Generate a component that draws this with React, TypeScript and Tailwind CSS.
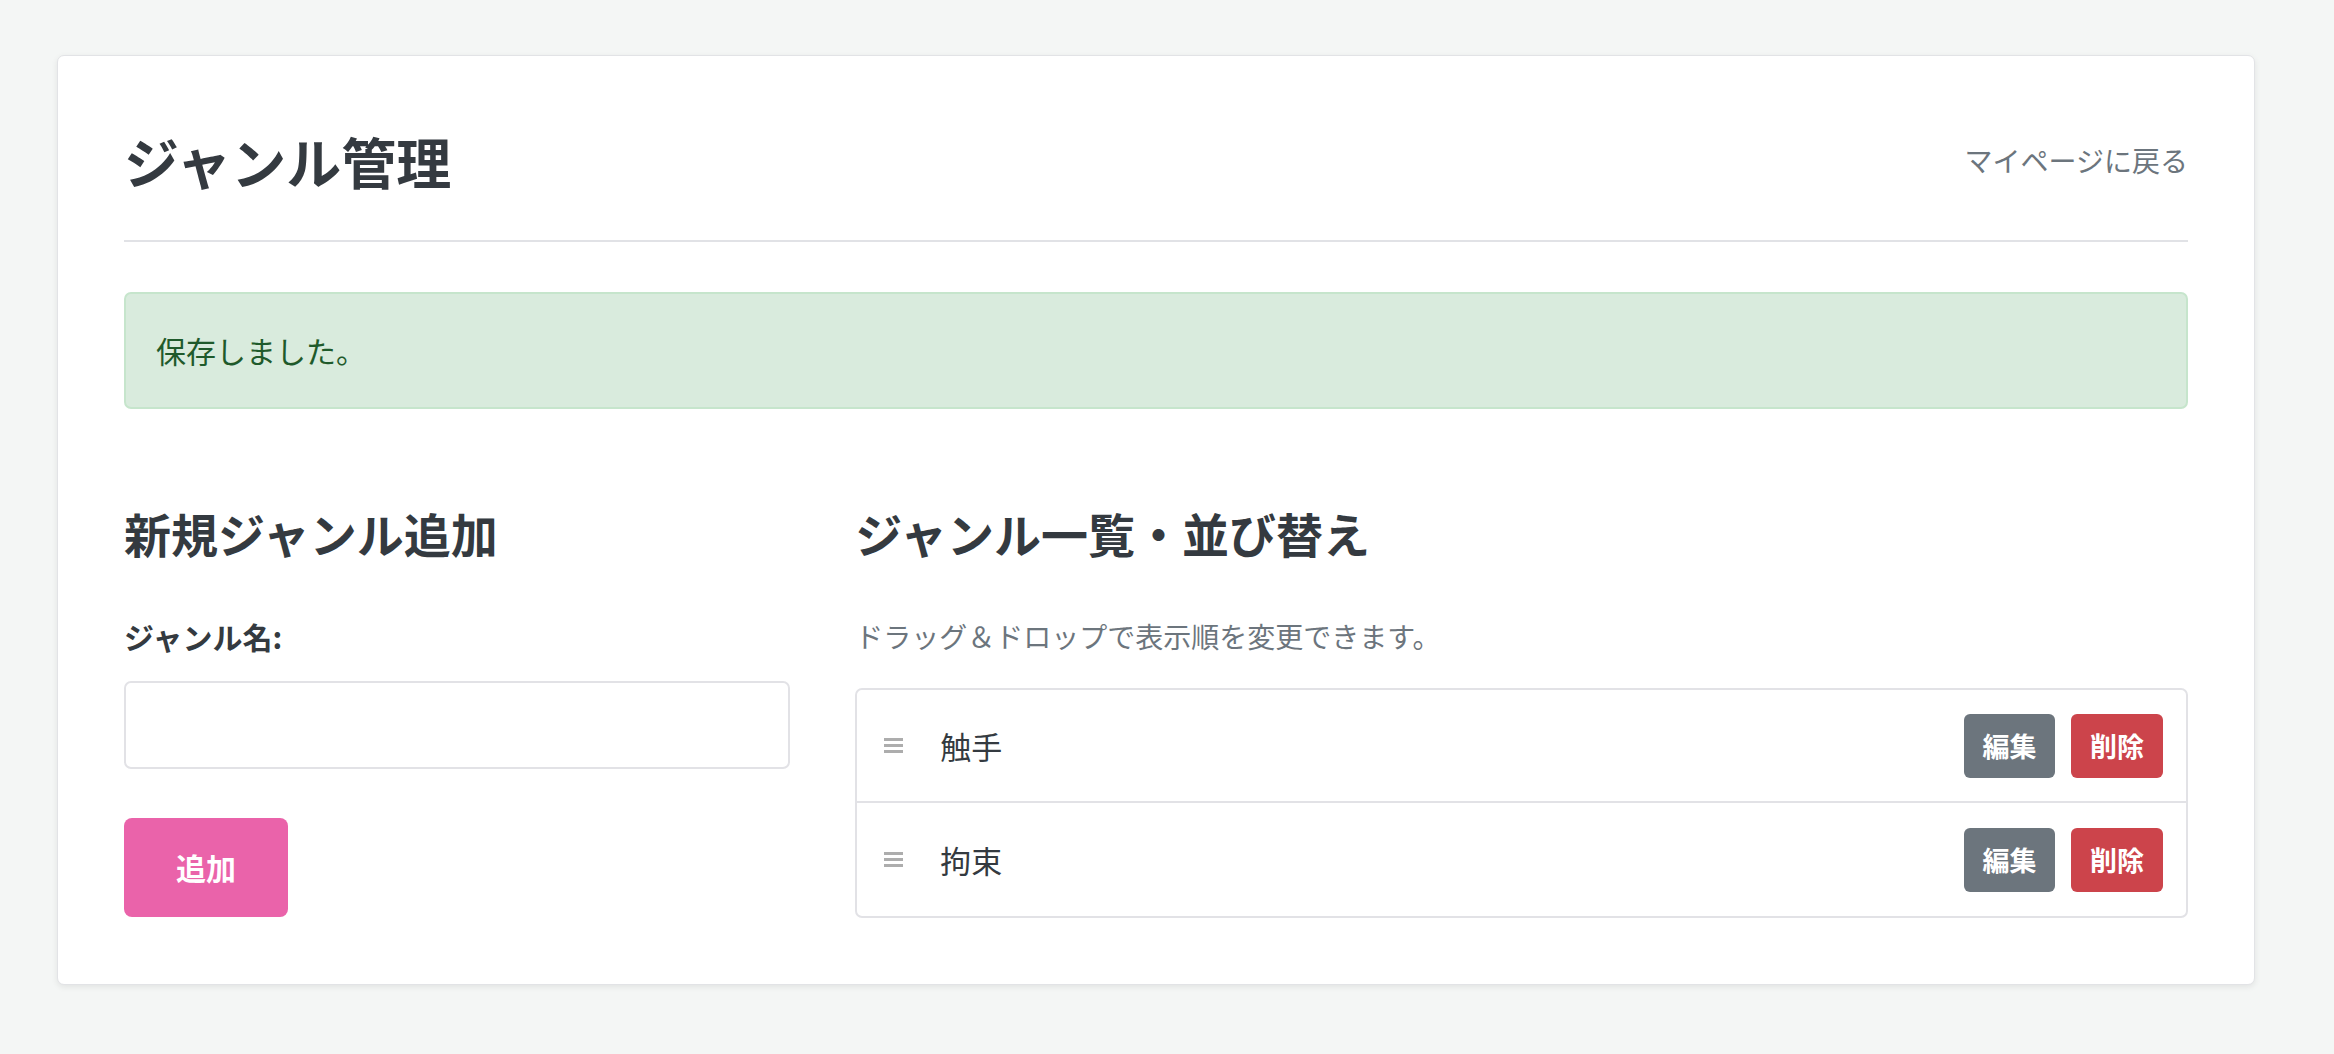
import React from 'react';

const genres = ['触手', '拘束'];

function DragHandle() {
  return (
    <svg width="19" height="15" viewBox="0 0 19 15" className="shrink-0">
      <rect x="0" y="0" width="19" height="3" fill="#adadad" />
      <rect x="0" y="6" width="19" height="3" fill="#adadad" />
      <rect x="0" y="12" width="19" height="3" fill="#adadad" />
    </svg>
  );
}

function GenreRow({ name, last }: { name: string; last: boolean }) {
  return (
    <div
      className={`flex h-[113px] items-center pl-[27px] pr-[23px] ${last ? '' : 'border-b-2 border-[#e2e2e6]'}`}
    >
      <DragHandle />
      <span className="ml-[37px] text-[31px] leading-[1.5] text-[#343a40]">{name}</span>
      <div className="ml-auto flex gap-[16px]">
        <button className="h-[64px] w-[91px] rounded-[6px] bg-[#6c757d] text-[27px] font-bold text-white">
          編集
        </button>
        <button className="h-[64px] w-[92px] rounded-[6px] bg-[#cc444b] text-[27px] font-bold text-white">
          削除
        </button>
      </div>
    </div>
  );
}

export default function App() {
  return (
    <div
      className="min-h-screen bg-[#f4f6f5] pl-[57px] pt-[55px] pb-[60px]"
      style={{ fontFamily: '"Noto Sans CJK JP", "Noto Sans", sans-serif' }}
    >
      <div className="w-[2198px] rounded-[7px] border border-[#e2e3e6] bg-white px-[66px] pb-[66px] pt-[71px] shadow-[0_2px_6px_rgba(0,0,0,0.08)]">
        <div className="flex items-center justify-between border-b-2 border-[#e1e2e6] pb-[47px]">
          <h1 className="text-[55px] font-bold leading-[1.2] text-[#343a40]">ジャンル管理</h1>
          <a className="text-[28px] leading-[1.5] text-[#6c757d]">マイページに戻る</a>
        </div>

        <div className="mt-[50px] rounded-[7px] border-2 border-[#c6e5cc] bg-[#d9ebdd] px-[30px] py-[34px] text-[30px] leading-[1.5] text-[#1f5a2b]">
          保存しました。
        </div>

        <div className="mt-[96px] grid grid-cols-[1fr_2fr] gap-[65px]">
          <div>
            <h2 className="text-[47px] font-bold leading-[1.2] text-[#343a40]">新規ジャンル追加</h2>
            <label className="mt-[53px] block text-[30px] font-bold leading-[1.5] text-[#343a40]">
              ジャンル名:
            </label>
            <input
              type="text"
              className="mt-[22px] block h-[88px] w-full rounded-[7px] border-2 border-[#e2e2e6] bg-white px-[20px] text-[30px] outline-none"
            />
            <button className="mt-[49px] h-[99px] w-[164px] rounded-[8px] bg-[#ea63aa] text-[30px] font-bold text-white">
              追加
            </button>
          </div>

          <div>
            <h2 className="text-[47px] font-bold leading-[1.2] text-[#343a40]">ジャンル一覧・並び替え</h2>
            <p className="mt-[54px] text-[28px] leading-[1.5] text-[#6c757d]">
              ドラッグ＆ドロップで表示順を変更できます。
            </p>
            <div className="mt-[31px] overflow-hidden rounded-[7px] border-2 border-[#e2e2e6]">
              {genres.map((g, i) => (
                <GenreRow key={g} name={g} last={i === genres.length - 1} />
              ))}
            </div>
          </div>
        </div>
      </div>
    </div>
  );
}
